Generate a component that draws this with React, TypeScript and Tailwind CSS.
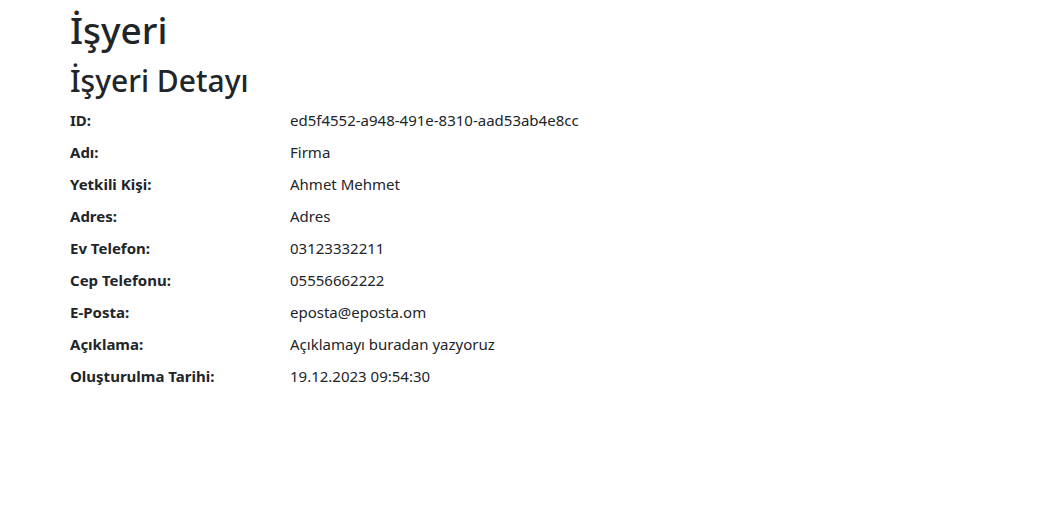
const rows: [string, string][] = [
  ['ID:', 'ed5f4552-a948-491e-8310-aad53ab4e8cc'],
  ['Adı:', 'Firma'],
  ['Yetkili Kişi:', 'Ahmet Mehmet'],
  ['Adres:', 'Adres'],
  ['Ev Telefon:', '03123332211'],
  ['Cep Telefonu:', '05556662222'],
  ['E-Posta:', 'eposta@eposta.om'],
  ['Açıklama:', 'Açıklamayı buradan yazyoruz'],
  ['Oluşturulma Tarihi:', '19.12.2023 09:54:30'],
];

export default function App() {
  return (
    <div className="min-h-screen bg-white text-[#212529] font-['Noto_Sans',sans-serif]">
      <main className="pl-[70px] pt-[6px]">
        <h1 className="text-[37px] leading-[48px] font-medium mb-[8px]">İşyeri</h1>
        <h2 className="text-[30px] leading-[38px] font-medium mb-[8px]">İşyeri Detayı</h2>
        <dl className="grid grid-cols-[220px_1fr] text-[15px] leading-[24px]">
          {rows.map(([label, value]) => (
            <div key={label} className="contents">
              <dt className="font-bold mb-[8px]">{label}</dt>
              <dd className="mb-[8px]">{value}</dd>
            </div>
          ))}
        </dl>
      </main>
    </div>
  );
}
